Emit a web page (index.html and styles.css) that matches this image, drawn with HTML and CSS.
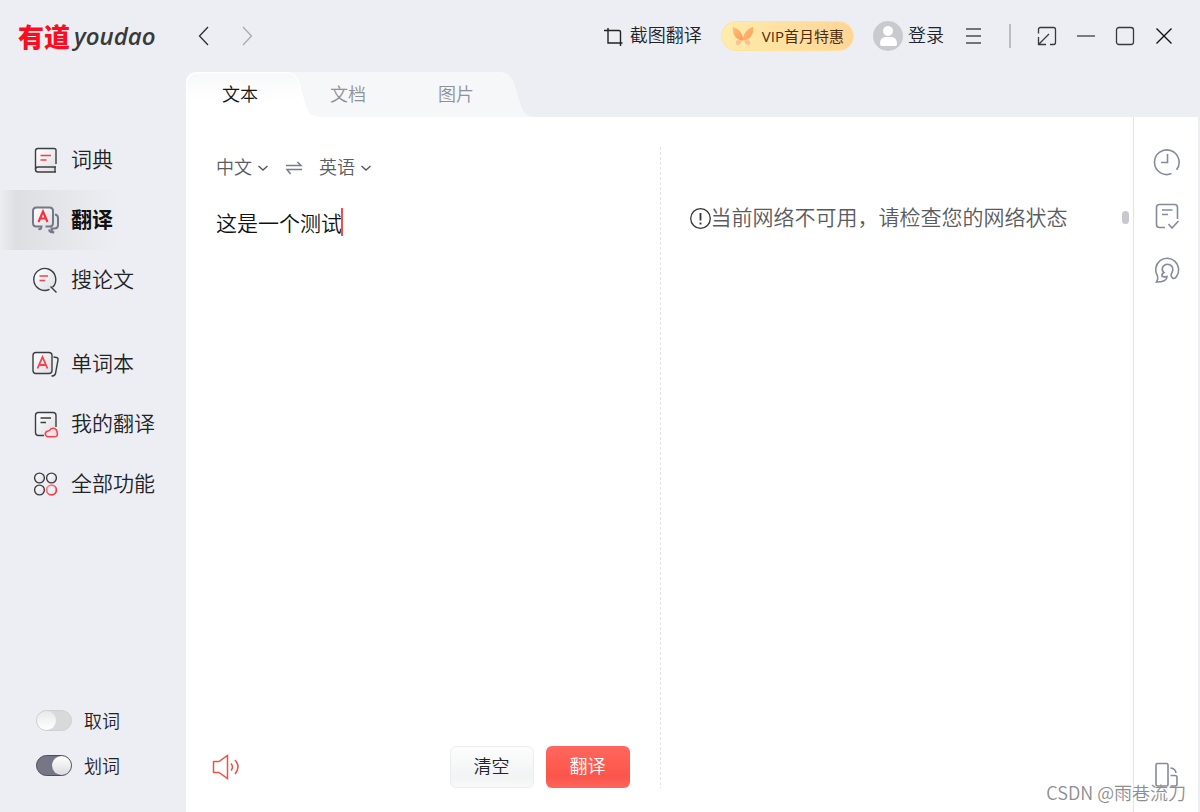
FILE: index.html
```html
<!DOCTYPE html>
<html lang="zh-CN">
<head>
<meta charset="utf-8">
<title>有道 youdao</title>
<link rel="stylesheet" href="styles.css">
</head>
<body>
<svg class="defs" width="0" height="0" aria-hidden="true">
  <defs>
    <linearGradient id="red" x1="0" y1="0" x2="1" y2="1"><stop offset="0" stop-color="#ff8a95"/><stop offset="1" stop-color="#f5222d"/></linearGradient>
    <linearGradient id="paper" x1="0" y1="0" x2="1" y2="1"><stop offset="0" stop-color="#fff"/><stop offset="1" stop-color="#dddee2"/></linearGradient>
    <linearGradient id="wing" x1="0" y1="0" x2="1" y2="1"><stop offset="0" stop-color="#ffc27c"/><stop offset="1" stop-color="#fb9a55"/></linearGradient>
    <linearGradient id="tabfill" x1="0" y1="0" x2="0" y2="1"><stop offset="0" stop-color="#f7f8f8"/><stop offset=".6" stop-color="#fff"/></linearGradient>
  </defs>
</svg>
<div class="app">
  <aside class="sidebar">
    <div class="logo"><span class="logo-cn">有道</span><span class="logo-en">youdao</span></div>
    <nav class="menu">
      <a class="item" href="#dict">
        <svg width="28" height="28" viewBox="0 0 28 28" fill="none" stroke="#3c3d42" stroke-width="1.4"><path d="M25 18V4.500Q25 2.500 23 2.500H7Q4.500 2.500 4.500 5V23.500Q4.500 26 7 26H25" fill="url(#paper)"/><path d="M25 21H7Q4.500 21 4.500 23.500M24 21V26"/><path d="M9.500 9.500H20M9.500 14H15.500" stroke="#f8404c" stroke-width="1.600"/></svg>
        词典</a>
      <a class="item active" href="#translate" aria-current="page">
        <svg width="28" height="28" viewBox="0 0 28 28" fill="none" stroke="#74778a" stroke-width="2"><path d="M10 20.500H5.500Q2 20.500 2 17V5Q2 1.500 5.500 1.500H18.500Q22 1.500 22 5V17Q22 20.500 18.500 20.500H14.500" fill="url(#paper)" stroke="none"/><path d="M7.500 22.500Q10 24.500 10.500 20.500H5.500Q2 20.500 2 17V5Q2 1.500 5.500 1.500H18.500Q22 1.500 22 5V17Q22 20.500 18.500 20.500H14.500M24 8.500Q27 9 27 12V19Q27 22.500 23 22.500H20.500Q20.500 25.500 23 26.500Q18.500 26.500 18 23.500"/><path d="M7.500 16L12 5.500L16.500 16M9 12.500H15" stroke="#f5333f" stroke-width="2.200"/></svg>
        翻译</a>
      <a class="item" href="#paper-search">
        <svg width="28" height="28" viewBox="0 0 28 28" fill="none" stroke="#3c3d42" stroke-width="1.4"><path d="M18.500 23.400A11 11 0 1 1 21.500 21.300" fill="url(#paper)"/><path d="M19.500 20.500L25.500 26.500"/><path d="M8.500 10H17M8.500 14.500H14" stroke="#f8404c" stroke-width="1.600"/></svg>
        搜论文</a>
      <a class="item group" href="#wordbook">
        <svg width="28" height="28" viewBox="0 0 28 28" fill="none" stroke="#3c3d42" stroke-width="1.4"><rect x="2" y="2.500" width="19" height="21" rx="3" fill="url(#paper)"/><path d="M22.500 7L25.500 7.500Q27.500 8 27 10L24.500 23.500Q24 26 20.500 26"/><path d="M6.500 18.500L11.500 7L16.500 18.500M8 15H15" stroke="#f8404c" stroke-width="1.800"/></svg>
        单词本</a>
      <a class="item" href="#mine">
        <svg width="28" height="28" viewBox="0 0 28 28" fill="none" stroke="#3c3d42" stroke-width="1.4"><path d="M13 25.500H7.500Q4.500 25.500 4.500 22.500V5.500Q4.500 2.500 7.500 2.500H22Q25 2.500 25 5.500V17" fill="url(#paper)"/><path d="M9.500 8H20M9.500 12.500H15"/><path d="M16.500 26.800A3 3 0 0 1 16 21.200Q18 21 18.500 20.500A4 4 0 0 1 26 21.500Q27.500 26.800 23.500 26.800Z" stroke="#f8404c" stroke-width="1.600" fill="#fbe3e6"/></svg>
        我的翻译</a>
      <a class="item" href="#all">
        <svg width="28" height="28" viewBox="0 0 28 28" fill="none" stroke="#3c3d42" stroke-width="1.400"><circle cx="8.500" cy="8" r="4.900" fill="url(#paper)"/><circle cx="20.500" cy="8" r="4.900" fill="url(#paper)"/><circle cx="8.500" cy="20" r="4.900" fill="url(#paper)"/><circle cx="20.500" cy="20" r="4.900" stroke="url(#red)" stroke-width="1.800"/></svg>
        全部功能</a>
    </nav>
    <div class="switches">
      <label class="switch"><input type="checkbox">取词</label>
      <label class="switch"><input type="checkbox" checked>划词</label>
    </div>
  </aside>

  <div class="content">
    <header class="titlebar">
      <div class="history">
        <button class="icon" aria-label="后退"><svg width="20" height="20" viewBox="0 0 20 20" fill="none" stroke="#2b2c30" stroke-width="1.300"><path d="M14 1L5.500 10L14 19"/></svg></button>
        <button class="icon" aria-label="前进"><svg width="20" height="20" viewBox="0 0 20 20" fill="none" stroke="#a9aaae" stroke-width="1.300"><path d="M6 1L14.500 10L6 19"/></svg></button>
      </div>
      <div class="tools">
        <button class="tool shot"><svg width="20" height="20" viewBox="0 0 20 20" fill="none" stroke="#222" stroke-width="1.400"><path d="M5 2V17H19.500M1 4.500H16Q17.500 4.500 17.500 6V20"/></svg>截图翻译</button>
        <button class="vip"><svg width="22" height="22" viewBox="0 0 24 22"><path d="M12 13Q10 4 1 1Q0 10 6 14Q9 15.500 12 16Z" fill="url(#wing)"/><path d="M12 13Q14 4 23 1Q24 10 18 14Q15 15.500 12 16Z" fill="url(#wing)"/><path d="M11 16Q4 14 4 19Q4 22 9 20Z M13 16Q20 14 20 19Q20 22 15 20Z" fill="#fdc090"/></svg>VIP首月特惠</button>
        <button class="tool login"><svg width="30" height="30" viewBox="0 0 30 30"><circle cx="15" cy="15" r="15" fill="#c9cacf"/><circle cx="15" cy="10" r="5" fill="#fff"/><path d="M7 23Q7 16 13 16H18Q24 16 24 23Q24 25 22 25H9Q7 25 7 23Z" fill="#fff"/></svg>登录</button>
        <button class="icon" aria-label="菜单"><svg width="20" height="20" viewBox="0 0 20 20" stroke="#4a4b50" stroke-width="1.400"><path d="M3 3H18M3 10H18M3 17H18"/></svg></button>
      </div>
      <div class="window">
        <button class="icon" aria-label="迷你窗口"><svg width="20" height="20" viewBox="0 0 20 20" fill="none" stroke="#37383c" stroke-width="1.300"><path d="M1.500 7.500V3.500Q1.500 1.500 3.500 1.500H16.500Q18.500 1.500 18.500 3.500V16.500Q18.500 18.500 16.500 18.500H13M1.500 11V18.500H9M1.500 18.500L12 8"/></svg></button>
        <button class="icon" aria-label="最小化"><svg width="20" height="20" viewBox="0 0 20 20" stroke="#4a4b50" stroke-width="1.400"><path d="M1 10H19"/></svg></button>
        <button class="icon" aria-label="最大化"><svg width="20" height="20" viewBox="0 0 20 20" fill="none" stroke="#37383c" stroke-width="1.300"><rect x="1.500" y="1.500" width="17" height="17" rx="2.500"/></svg></button>
        <button class="icon" aria-label="关闭"><svg width="20" height="20" viewBox="0 0 20 20" stroke="#111" stroke-width="1.400"><path d="M2.500 2.500L17.500 17.500M17.500 2.500L2.500 17.500"/></svg></button>
      </div>
    </header>

    <div class="tabs" role="tablist">
      <svg class="tabs-bg" width="348" height="45" viewBox="0 0 348 45" aria-hidden="true"><path d="M0 45V12Q0 0 12 0H314Q324 0 328 11L335 34Q339 45 348 45Z" fill="#f6f7f9"/><path d="M0 45V12Q0 0 12 0H100Q110 0 113 10L120 34Q123 45 134 45Z" fill="#fff"/><path d="M1 45V13Q1 1.500 13 1.500H100Q109 1.500 112 10L119 34Q122 45 130 45Z" fill="url(#tabfill)"/></svg>
      <button class="tab selected" role="tab" aria-selected="true">文本</button>
      <button class="tab" role="tab" aria-selected="false">文档</button>
      <button class="tab" role="tab" aria-selected="false">图片</button>
    </div>

    <main class="work">
      <section class="source">
        <div class="langs">
          <span class="lang"><select aria-label="源语言"><option>中文</option></select><svg width="12" height="12" viewBox="0 0 12 12" fill="none" stroke="#55565c" stroke-width="1.400"><path d="M1.500 4L6 8L10.500 4"/></svg></span>
          <button class="icon" aria-label="交换语言"><svg width="18" height="18" viewBox="0 0 18 18" fill="none" stroke="#777b8c" stroke-width="1.500"><path d="M1 6.500H16L12.500 3M17 10.500H2L5.500 15"/></svg></button>
          <span class="lang"><select aria-label="目标语言"><option>英语</option></select><svg width="12" height="12" viewBox="0 0 12 12" fill="none" stroke="#55565c" stroke-width="1.400"><path d="M1.500 4L6 8L10.500 4"/></svg></span>
        </div>
        <div class="editor"><textarea aria-label="原文" spellcheck="false">这是一个测试</textarea><span class="caret"></span></div>
        <div class="actions">
          <button class="icon speak" aria-label="朗读"><svg width="28" height="26" viewBox="0 0 28 26" fill="none" stroke="#ee5048" stroke-width="1.500"><path d="M2 7.500H7L15.500 1.500V24.500L7 18.500H2Q1.500 18.500 1.500 18V8Q1.500 7.500 2 7.500ZM19 9.500Q22 13 19 16.500M23 6Q29 13 23 20"/></svg></button>
          <button class="btn plain">清空</button>
          <button class="btn primary">翻译</button>
        </div>
      </section>
      <section class="target">
        <p class="notice"><svg width="21" height="21" viewBox="0 0 21 21" fill="none" stroke="#333"><circle cx="10.500" cy="10.500" r="9.800" stroke-width="1.300"/><path d="M10.500 5V12.500M10.500 14.500V16.500" stroke-width="1.800"/></svg>当前网络不可用，请检查您的网络状态</p>
        <span class="thumb"></span>
      </section>
      <aside class="rail">
        <button class="icon" aria-label="历史"><svg width="28" height="28" viewBox="0 0 28 28" fill="none" stroke="#858a9c" stroke-width="1.600"><path d="M18.500 25.600A12.300 12.300 0 1 1 23.500 21.800M14.500 6V14.500H8"/></svg></button>
        <button class="icon" aria-label="校对"><svg width="28" height="28" viewBox="0 0 28 28" fill="none" stroke="#858a9c" stroke-width="1.600"><path d="M12 25.500H6.500Q3.500 25.500 3.500 22.500V5.500Q3.500 2.500 6.500 2.500H21.500Q24.500 2.500 24.500 5.500V17M9 8H19.500M9 12.500H15M15.500 22L19 26L25.500 19"/></svg></button>
        <button class="icon" aria-label="人工翻译"><svg width="28" height="28" viewBox="0 0 28 28" fill="none" stroke="#858a9c" stroke-width="1.600"><path d="M3.500 26Q5.500 23 4.500 20A11.500 11.500 0 1 1 23.500 20.500Q21.500 23.500 19.500 22Q17 19.500 19 16.500Q20.500 14 19.500 11.500A5.500 5.500 0 0 0 9.500 11.500Q8.500 14.500 11 16.500Q8.500 17.500 9 20Q11 21.500 14 20.500Q14 26 3.500 26Z"/></svg></button>
        <button class="icon last" aria-label="布局"><svg width="28" height="28" viewBox="0 0 28 28" fill="none" stroke="#858a9c" stroke-width="1.600"><rect x="3" y="2.500" width="12" height="22.500" rx="1.500"/><path d="M17.500 7Q22.500 7.500 23 12M17.500 14.500H22Q24 14.500 24 16.500V23Q24 25 22 25H17.500"/></svg></button>
      </aside>
    </main>
  </div>
  <div class="watermark">CSDN @雨巷流刀</div>
</div>
</body>
</html>
```
FILE: styles.css
```css
* { box-sizing: border-box; }
body {
  margin: 0;
  background: #edeef3;
  color: #222326;
  font: 350 18px/24px "Liberation Sans", "Noto Sans CJK SC", sans-serif;
}
button, select, textarea { font: inherit; color: inherit; }
button { border: 0; padding: 0; background: none; cursor: pointer; }
svg { display: block; flex: none; }
.defs { position: absolute; }
.app { position: relative; display: flex; min-height: 100vh; }

.sidebar { width: 186px; flex: none; display: flex; flex-direction: column; }
.logo { height: 72px; display: flex; align-items: center; gap: 4px; padding: 3px 0 0 18px; }
.logo-cn { color: #fb0d1f; font-size: 26px; line-height: 32px; font-weight: 900; }
.logo-en { color: #393939; font: italic 600 24px/32px "Open Sans", sans-serif; padding-bottom: 3px; }
.menu { padding-top: 58px; display: flex; flex-direction: column; }
.item {
  height: 60px; padding-left: 31px; display: flex; align-items: center; gap: 12px;
  color: inherit; text-decoration: none; font-size: 21px; line-height: 28px;
}
.item.active { color: #111; font-weight: 700; background: linear-gradient(90deg, #edeef3 0, #dddee1 16px, #e0e1e4 30px, #edeef3 118px); }
.item.group { margin-top: 24px; }
.switches { margin-top: auto; padding: 0 0 35px 36px; display: flex; flex-direction: column; gap: 21px; }
.switch { display: flex; align-items: center; gap: 12px; font-family: "Noto Sans CJK SC", sans-serif; }
.switch input {
  appearance: none; margin: 0; width: 36px; height: 21px; border-radius: 11px;
  background: #d8d9db; border: 1px solid #cfd0d2; display: flex;
}
.switch input::before { content: ""; width: 19px; border-radius: 50%; background: linear-gradient(#e9e9e9, #fff); }
.switch input:checked { background: #757786; border-color: #4c4d5c; justify-content: flex-end; }
.switch input:checked::before { background: linear-gradient(#fff, #dcdcdf); }

.content { flex: 1; min-width: 0; display: flex; flex-direction: column; }
.titlebar { height: 72px; display: flex; align-items: center; padding: 0 26px 0 8px; }
.history { display: flex; gap: 23px; }
.tools { margin-left: auto; display: flex; align-items: center; gap: 19px; }
.tool { display: flex; align-items: center; gap: 7px; }
.login { gap: 5px; }
.vip {
  height: 30px; padding: 0 9px 0 10px; display: flex; align-items: center; gap: 8px;
  border: 1px solid #ffe39a; border-radius: 15px; color: #4d2b0c;
  font-family: "Open Sans", "Noto Sans CJK SC", sans-serif; font-size: 15px; font-weight: 400;
  background: linear-gradient(90deg, #ffecac, #ffd596);
}
.window { margin-left: 26px; padding-left: 26px; display: flex; align-items: center; gap: 19px; height: 24px; border-left: 2px solid #bcbdc1; }

.tabs { position: relative; height: 45px; display: flex; }
.tabs-bg { position: absolute; left: 0; top: 0; }
.tab { position: relative; width: 108px; color: #8f9196; }
.tab.selected { color: #151515; }

.work { flex: 1; display: grid; grid-template-columns: 1fr 1fr 65px; background: #fff; margin-right: 2px; }
.source { min-width: 0; padding: 39px 30px 24px; display: flex; flex-direction: column; }
.langs { display: flex; align-items: center; gap: 16px; color: #5b5c61; }
.lang { display: flex; align-items: center; gap: 5px; }
.lang select { appearance: none; border: 0; padding: 0; margin: 0; background: none; }
.editor { position: relative; flex: 1; margin-top: 28px; }
.editor textarea {
  display: block; width: 100%; height: 100%; padding: 0; border: 0; outline: 0; resize: none;
  background: none; color: #111; font-size: 21px; line-height: 32px;
}
.caret { position: absolute; left: 125px; top: 0; width: 2px; height: 28px; background: #fb4c41; }
.actions { display: flex; align-items: center; gap: 12px; }
.speak { margin: 0 auto 0 -4px; }
.btn { width: 84px; height: 42px; border-radius: 6px; }
.plain { border: 1px solid #eceded; background: linear-gradient(#fdfdfd, #f1f3f4 75%, #f8f9f9); }
.primary { color: #fff; background: linear-gradient(#ff685f, #ff5c52 40%, #fa554b 72%, #ff655c); }
.target { position: relative; min-width: 0; padding: 87px 0 0 30px; }
.target::before {
  content: ""; position: absolute; left: 0; top: 30px; bottom: 24px; width: 1px;
  background: repeating-linear-gradient(#e1e2e4 0 3px, transparent 3px 5px);
}
.notice { margin: 0; display: flex; align-items: center; color: #5a5b60; font-size: 21px; line-height: 28px; }
.thumb { position: absolute; right: 4px; top: 94px; width: 7px; height: 13px; border-radius: 4px; background: #c8c9ce; }
.rail {
  border-left: 1px solid #e3e3e8; padding: 31px 0 23px 2px;
  display: flex; flex-direction: column; align-items: center; gap: 26px;
}
.last { margin-top: auto; }
.watermark { position: absolute; right: 14px; bottom: 8px; color: #8d8e91; font-family: "Noto Sans CJK SC", sans-serif; }
```
